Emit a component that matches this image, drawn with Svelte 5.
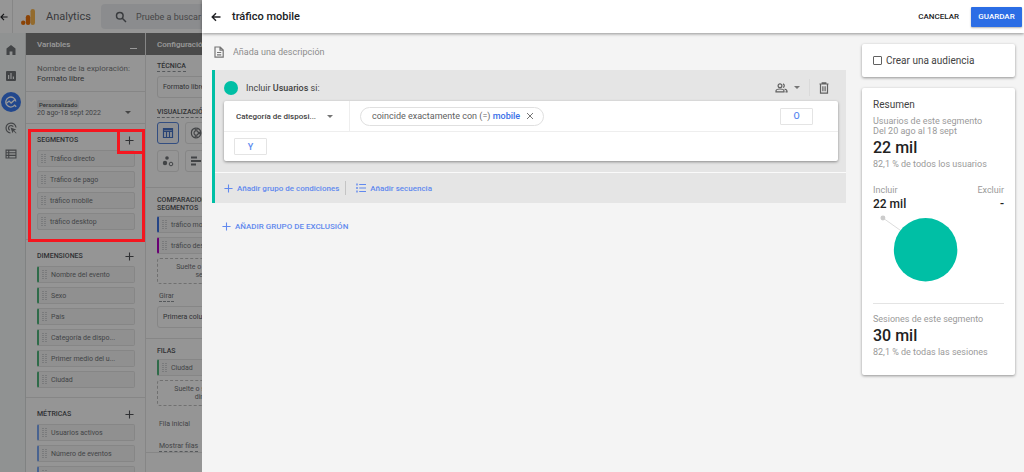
<script lang="ts">
  const segments = ['Tráfico directo', 'Tráfico de pago', 'tráfico mobile', 'tráfico desktop'];
  const dimensions = ['Nombre del evento', 'Sexo', 'País', 'Categoría de dispo...', 'Primer medio del u...', 'Ciudad'];
  const metrics = ['Usuarios activos', 'Número de eventos', 'Sesiones'];

  let description = $state('');
  let createAudience = $state(false);
</script>

{#snippet plus()}
  <svg class="plus" viewBox="0 0 10 10" aria-hidden="true"><path d="M5 .5v9M.5 5h9" /></svg>
{/snippet}

{#snippet chip(label: string, kind: string)}
  <li class="chip {kind}">
    <svg class="grip" viewBox="0 0 5 10" aria-hidden="true"><path d="M1 0v10M4 0v10" /></svg>
    <span>{label}</span>
  </li>
{/snippet}

<div class="app">
  <header class="topbar">
    <button class="back" aria-label="Atrás">
      <svg viewBox="0 0 10 10"><path d="M9.500 5H1.500M5 1.200 1.200 5 5 8.800" /></svg>
    </button>
    <div class="brand">
      <svg class="logo" viewBox="0 0 14 16" aria-hidden="true">
        <rect x="9.500" y="0" width="4.500" height="16" rx="2.200" fill="#f5b24e" />
        <rect x="4.800" y="6" width="4.500" height="10" rx="2.200" fill="#e8710a" />
        <circle cx="2.200" cy="13.700" r="2.200" fill="#e8710a" />
      </svg>
      <span>Analytics</span>
    </div>
    <label class="search">
      <svg viewBox="0 0 12 12" aria-hidden="true"><circle cx="4.800" cy="4.800" r="3.300" /><path d="m7.300 7.300 3.700 3.700" /></svg>
      <input type="text" placeholder="Pruebe a buscar" aria-label="Buscar" />
    </label>
  </header>

  <div class="workspace">
    <nav class="rail" aria-label="Principal">
      <a href="#inicio" aria-label="Inicio">
        <svg viewBox="0 0 12 12"><path fill="currentColor" d="M6 1 1.500 4.600V11H4.600V7.400H7.400V11H10.500V4.600Z" /></svg>
      </a>
      <a href="#informes" aria-label="Informes">
        <svg viewBox="0 0 12 12"><path fill="currentColor" fill-rule="evenodd" d="M2 1h8a1 1 0 0 1 1 1v8a1 1 0 0 1-1 1H2a1 1 0 0 1-1-1V2a1 1 0 0 1 1-1ZM3 5v4h1.200V5ZM5.400 3v6h1.200V3ZM7.800 6.500V9H9V6.500Z" /></svg>
      </a>
      <a href="#explorar" class="current" aria-label="Explorar">
        <svg viewBox="0 0 12 12" fill="none" stroke="currentColor" stroke-width="1.300">
          <path d="M10.800 5.500A5 5 0 1 0 9.700 9.200L11.200 10.700" /><path d="m1.500 7.200 2.600-2.100 2 1.900 3.900-3.600" />
        </svg>
      </a>
      <a href="#publicidad" aria-label="Publicidad">
        <svg viewBox="0 0 12 12" fill="none" stroke="currentColor" stroke-width="1.200">
          <path d="M5.500 11A5 5 0 1 1 11 5.500M4.700 8.300A2.600 2.600 0 1 1 8.300 4.700" /><path fill="currentColor" stroke="none" d="m5.500 5.500 5.700 2-2.100 1L11.500 11 11 11.500 8.500 9.100l-1 2.100Z" />
        </svg>
      </a>
      <a href="#configurar" aria-label="Configurar">
        <svg viewBox="0 0 12 12"><path fill="currentColor" fill-rule="evenodd" d="M.5 1.500h11v9H.5ZM1.600 2.700v1.500h1.600V2.700ZM4.300 2.700v1.500h6.100V2.700ZM1.600 5.300v1.500h1.600V5.300ZM4.300 5.300v1.500h6.100V5.300ZM1.600 7.900v1.500h1.600V7.900ZM4.300 7.900v1.500h6.100V7.900Z" /></svg>
      </a>
    </nav>

    <section class="column variables">
      <h2 class="column-head">Variables <button class="minimize" aria-label="Minimizar"></button></h2>
      <div class="name">
        <span class="muted">Nombre de la exploración:</span>
        <span>Formato libre</span>
      </div>
      <button class="dates">
        <span class="range"><span class="tag">Personalizado</span><span>20 ago-18 sept 2022</span></span>
        <span class="caret"></span>
      </button>
      <div class="block segments">
        <div class="block-head"><h3>SEGMENTOS</h3><button aria-label="Añadir segmento">{@render plus()}</button></div>
        <ul>
          {#each segments as s}{@render chip(s, 'segment')}{/each}
        </ul>
        <div class="mark"></div>
        <div class="mark mark-add"></div>
      </div>
      <div class="block">
        <div class="block-head"><h3>DIMENSIONES</h3><button aria-label="Añadir dimensión">{@render plus()}</button></div>
        <ul>
          {#each dimensions as d}{@render chip(d, 'dimension')}{/each}
        </ul>
      </div>
      <div class="block">
        <div class="block-head"><h3>MÉTRICAS</h3><button aria-label="Añadir métrica">{@render plus()}</button></div>
        <ul>
          {#each metrics as m}{@render chip(m, 'metric')}{/each}
        </ul>
      </div>
    </section>

    <section class="column settings">
      <h2 class="column-head">Configuración</h2>
      <div class="group technique">
        <label class="hint" for="technique">TÉCNICA</label>
        <select id="technique"><option>Formato libre</option></select>
        <h3 class="hint visual-title">VISUALIZACIÓN</h3>
        <div class="visuals">
          <button class="selected" aria-label="Tabla">
            <svg viewBox="0 0 12 12" fill="none" stroke="currentColor" stroke-width="1.200"><path d="M1.500 1.500h9v9h-9ZM1.500 4.500h9M4.500 4.500v6M7.500 4.500v6" /><path d="M1.500 2.500h9" stroke-width="2" /></svg>
          </button>
          <button aria-label="Gráfico de anillos">
            <svg viewBox="0 0 12 12" fill="none" stroke="currentColor" stroke-width="1.200"><path d="M5.300 1.200a4.900 4.900 0 0 0 0 9.600V8a2.200 2.200 0 0 1 0-4ZM6.800 1.200A4.900 4.900 0 0 1 10.800 5.300H8.200A2.200 2.200 0 0 0 6.800 4ZM6.800 10.800A4.900 4.900 0 0 0 10.800 6.700H8.200A2.200 2.200 0 0 1 6.800 8Z" /></svg>
          </button>
          <button aria-label="Gráfico de líneas"></button>
          <button aria-label="Gráfico de dispersión">
            <svg viewBox="0 0 12 12"><circle cx="5" cy="3" r="1.800" fill="currentColor" /><circle cx="3" cy="8" r="2.200" fill="currentColor" /><circle cx="9" cy="9" r="1.800" fill="none" stroke="currentColor" /></svg>
          </button>
          <button aria-label="Gráfico de barras">
            <svg viewBox="0 0 12 12" fill="none" stroke="currentColor" stroke-width="1.800"><path d="M1 2.500h6M1 6h10M1 9.500h5" /></svg>
          </button>
          <button aria-label="Mapa"></button>
        </div>
      </div>
      <div class="group compare">
        <h3>COMPARACIONES DE<br />SEGMENTOS</h3>
        <ul>
          {@render chip('tráfico mobile', 'blue')}
          {@render chip('tráfico desktop', 'purple')}
        </ul>
        <div class="drop">Suelte o seleccione un<br />segmento</div>
        <label class="hint plain" for="pivot">Girar</label>
        <select id="pivot"><option>Primera columna</option></select>
      </div>
      <div class="group rows">
        <h3>FILAS</h3>
        <ul>{@render chip('Ciudad', 'dimension')}</ul>
        <div class="drop">Suelte o seleccione una<br />dimensión</div>
        <span class="plain">Fila inicial</span>
        <span class="hint plain">Mostrar filas</span>
      </div>
    </section>
  </div>

  <div class="scrim"></div>

  <section class="drawer" aria-label="Editar segmento">
    <header class="drawer-head">
      <button class="back" aria-label="Volver">
        <svg viewBox="0 0 10 10"><path d="M9.500 5H1.500M5 1.200 1.200 5 5 8.800" /></svg>
      </button>
      <h1>tráfico mobile</h1>
      <button class="cancel">CANCELAR</button>
      <button class="save">GUARDAR</button>
    </header>

    <div class="drawer-body">
      <main class="editor">
        <label class="description">
          <svg viewBox="0 0 10 12" aria-hidden="true"><path d="M1 1h5.200L9.200 4v7.200H1ZM6 1v3.200h3M3 6.500h4.200M3 8.800h4.200" /></svg>
          <input type="text" placeholder="Añada una descripción" aria-label="Descripción" bind:value={description} />
        </label>

        <div class="conditions">
          <div class="conditions-head">
            <span class="dot"></span>
            <span>Incluir <b>Usuarios</b> si:</span>
            <button class="scope" aria-label="Ámbito">
              <svg viewBox="0 0 13 10" aria-hidden="true"><circle cx="5" cy="2.700" r="1.900" /><path d="M1 8.800V7.900C1 6.700 3.500 6 5 6s4 .7 4 1.900v.9ZM8 .9a1.900 1.900 0 0 1 0 3.600M9.600 6.200c1.400.4 2.400.9 2.400 1.700v.9H10.500" /></svg>
              <span class="caret"></span>
            </button>
            <button class="trash" aria-label="Eliminar grupo">
              <svg viewBox="0 0 10 12" aria-hidden="true"><path d="M.5 2h9M3.200 2V.8h3.600V2M1.500 2.200v9h7v-9M3.900 4.200v5M6.100 4.200v5" /></svg>
            </button>
          </div>

          <div class="card rule">
            <div class="rule-row">
              <div class="field">
                <select aria-label="Dimensión"><option>Categoría de disposi...</option></select>
                <span class="caret"></span>
              </div>
              <div class="filter">
                <span>coincide exactamente con (=) <b>mobile</b></span>
                <button aria-label="Quitar filtro"><svg viewBox="0 0 8 8"><path d="m1 1 6 6M7 1 1 7" /></svg></button>
              </div>
              <button class="logic or">O</button>
            </div>
            <div class="rule-row">
              <button class="logic and">Y</button>
            </div>
          </div>

          <div class="actions">
            <button class="link">{@render plus()} Añadir grupo de condiciones</button>
            <button class="link">
              <svg class="list" viewBox="0 0 10 10" aria-hidden="true"><path d="M3.200 1.500H10M3.200 5H10M3.200 8.500H10" /><path d="M.3 1.500h1.400M.3 5h1.400M.3 8.500h1.400" stroke-width="2" /></svg>
              Añadir secuencia
            </button>
          </div>
        </div>

        <button class="link exclude">{@render plus()} AÑADIR GRUPO DE EXCLUSIÓN</button>
      </main>

      <aside>
        <label class="card audience">
          <input type="checkbox" bind:checked={createAudience} />
          Crear una audiencia
        </label>
        <div class="card summary">
          <h2>Resumen</h2>
          <p>Usuarios de este segmento<br />Del 20 ago al 18 sept</p>
          <strong>22 mil</strong>
          <p>82,1 % de todos los usuarios</p>
          <dl>
            <div><dt>Incluir</dt><dd>22 mil</dd></div>
            <div class="right"><dt>Excluir</dt><dd>-</dd></div>
          </dl>
          <svg class="pie" viewBox="0 0 132 70" aria-hidden="true">
            <path d="M10 4 34 21" stroke="#dcdcdc" />
            <circle cx="10" cy="4" r="2.500" fill="#ccc" />
            <circle cx="53" cy="36" r="32" fill="#00bfa5" />
          </svg>
          <hr />
          <p>Sesiones de este segmento</p>
          <strong>30 mil</strong>
          <p>82,1 % de todas las sesiones</p>
        </div>
      </aside>
    </div>
  </section>
</div>

<style>
  :global(body) {
    font-family: Roboto, "Liberation Sans", sans-serif;
    color: #202124;
  }

  .app {
    position: relative;
    height: 100vh;
    overflow: hidden;
    background: #f8f8f8;
    font-size: 8px;
  }

  .app :global(*) { box-sizing: border-box; }

  button, input, select {
    font: inherit;
    color: inherit;
    background: none;
    border: 0;
    border-radius: 0;
    padding: 0;
    margin: 0;
    appearance: none;
  }

  button { cursor: pointer; }
  svg { display: block; flex: none; }
  h1, h2, h3, p, ul, dl, dd { margin: 0; padding: 0; }
  ul { list-style: none; }
  h3 { font-size: 7px; font-weight: 500; line-height: 8px; }
  input:focus { outline: none; }

  .back svg {
    width: 10px;
    height: 10px;
    fill: none;
    stroke: currentColor;
    stroke-width: 1.4;
  }

  .plus {
    width: 9px;
    height: 9px;
    fill: none;
    stroke: currentColor;
    stroke-width: 1.2;
  }

  .caret {
    border: 3px solid transparent;
    border-top-color: #757575;
    border-bottom: 0;
  }

  /* page behind the drawer */
  .topbar {
    display: flex;
    align-items: center;
    height: 33px;
    background: #fbfbfb;
  }

  .topbar .back {
    display: flex;
    align-items: center;
    width: 13px;
    height: 33px;
    border-right: 1px solid #e0e0e0;
  }

  .topbar .back svg { width: 8px; height: 8px; }

  .brand {
    display: flex;
    align-items: center;
    gap: 11px;
    width: 88px;
    padding-left: 8px;
    font-size: 11px;
    color: #5f6368;
  }

  .logo { width: 14px; height: 16px; }

  .search {
    display: flex;
    align-items: center;
    gap: 9px;
    flex: 1;
    height: 25px;
    padding-left: 14px;
    border-radius: 4px;
    background: #e8eaed;
  }

  .search svg {
    width: 12px;
    height: 12px;
    fill: none;
    stroke: #5f6368;
    stroke-width: 1.5;
  }

  .search input { flex: 1; font-size: 9px; }
  .search input::placeholder { color: #757575; opacity: 1; }

  .workspace { display: flex; color: #505357; font-size: 7px; }

  .rail {
    display: flex;
    flex-direction: column;
    align-items: center;
    gap: 6px;
    width: 26px;
    height: calc(100vh - 33px);
    padding: 7px 5px 0 1px;
    border-right: 1px solid #d5d9d9;
    background: #f1f4f3;
  }

  .rail a {
    display: grid;
    place-items: center;
    width: 20px;
    height: 20px;
    border-radius: 50%;
    color: #6f7276;
  }

  .rail svg { width: 12px; height: 12px; }
  .rail .current { background: #3a78ec; color: #fff; }

  .column { flex: none; border-right: 1px solid #dfdfdf; }
  .variables { width: 120px; }
  .settings { width: 130px; }

  .column-head {
    display: flex;
    justify-content: space-between;
    align-items: center;
    height: 22px;
    padding: 0 8px 0 11px;
    background: #7c7c7c;
    color: #fff;
    font-size: 8px;
    font-weight: 500;
  }

  .minimize {
    width: 7px;
    height: 9px;
    border-bottom: 1px solid #fff;
  }

  .name {
    display: flex;
    flex-direction: column;
    height: 37px;
    padding: 9px 0 0 11px;
    border-bottom: 1px solid #dfdfdf;
    font-size: 8px;
    line-height: 10px;
  }

  .muted { color: #7a7d80; }

  .dates {
    display: flex;
    justify-content: space-between;
    align-items: end;
    width: 100%;
    height: 32px;
    padding: 0 14px 5px 11px;
    border-bottom: 1px solid #dfdfdf;
    line-height: 9px;
    text-align: left;
    color: #6f7276;
  }

  .dates .caret { margin-bottom: 4px; }
  .range { display: flex; flex-direction: column; align-items: start; }

  .tag {
    padding: 0 2px;
    border-radius: 2px;
    background: #e6e6e6;
    color: #505357;
    font-size: 6px;
    font-weight: 500;
  }

  .block { padding: 10px 10px 9px 11px; }
  .block + .block { border-top: 1px solid #dfdfdf; }
  .segments { position: relative; }

  .block-head {
    display: flex;
    justify-content: space-between;
    align-items: center;
    height: 12px;
    padding-right: 1px;
    margin-bottom: 4px;
  }

  ul { display: grid; gap: 4px; }

  .chip {
    display: flex;
    align-items: center;
    gap: 4px;
    height: 17px;
    padding-left: 3px;
    border: 1px solid #e0e0e0;
    border-radius: 2px;
    background: #f0f0f0;
    color: #6f7276;
    white-space: nowrap;
  }

  .dimension, .metric, .blue, .purple { border-left-width: 2px; }
  .dimension { border-left-color: #4fb37a; }
  .metric { border-left-color: #7aa5f0; }
  .blue { border-left-color: #3f72e0; }
  .purple { border-left-color: #b000c0; }

  .grip {
    width: 5px;
    height: 10px;
    stroke: #a8abaf;
    stroke-width: 1;
    stroke-dasharray: 1 1;
  }

  .mark {
    position: absolute;
    z-index: 2;
    top: 5px;
    left: 2px;
    right: 0;
    bottom: -3px;
    border: 3px solid #f5161f;
  }

  .mark-add { left: auto; bottom: auto; width: 28px; height: 25px; }

  .group { padding: 0 10px 0 11px; border-bottom: 1px solid #dfdfdf; }
  .hint { display: inline-block; border-bottom: 1px dashed #909499; line-height: 9px; font-weight: 500; }
  .plain { display: block; width: max-content; margin-left: 2px; font-weight: 400; color: #6f7276; }
  .technique { height: 133px; padding-top: 7px; }
  .visual-title { margin-top: 10px; }
  .technique select { margin-top: 4px; }

  .settings select {
    display: block;
    width: 100%;
    height: 22px;
    padding-left: 5px;
    border: 1px solid #dfdfdf;
    border-radius: 3px;
  }

  .visuals {
    display: grid;
    grid-template-columns: repeat(3, 22px);
    gap: 6px;
    margin-top: 4px;
  }

  .visuals button {
    display: grid;
    place-items: center;
    height: 22px;
    border: 1px solid #dfdfdf;
    border-radius: 3px;
    color: #6f7276;
  }

  .visuals svg { width: 12px; height: 12px; }
  .visuals .selected { border-color: #5583d8; color: #4470c4; background: #eef1f6; }

  .compare { height: 151px; padding-top: 8px; }
  .compare ul { margin-top: 4px; }

  .drop {
    display: grid;
    place-content: center;
    height: 26px;
    margin-top: 4px;
    border: 1px dashed #bbb;
    border-radius: 3px;
    color: #6f7276;
    line-height: 8px;
    text-align: center;
  }

  .drop + .plain { margin-top: 8px; }
  .compare select { margin-top: 4px; }
  .rows { padding-top: 8px; }
  .rows ul { margin-top: 4px; }
  .rows .plain { margin-top: 14px; }

  .scrim {
    position: absolute;
    inset: 0;
    z-index: 1;
    background: rgba(0, 0, 0, 0.4);
  }

  /* segment editor */
  .drawer {
    position: absolute;
    z-index: 3;
    inset: 0 0 0 202px;
    display: flex;
    flex-direction: column;
    background: #f4f4f4;
  }

  .drawer-head {
    display: flex;
    align-items: center;
    height: 33px;
    padding: 0 2px 0 9px;
    background: #fff;
    box-shadow: 0 1px 3px rgba(0, 0, 0, 0.4);
  }

  h1 {
    flex: 1;
    margin-left: 11px;
    font-size: 11px;
    font-weight: 500;
  }

  .cancel, .save { font-weight: 500; }

  .save {
    width: 51px;
    height: 20px;
    margin-left: 12px;
    border-radius: 1px;
    background: #2b6de5;
    color: #fff;
    box-shadow: 0 1px 2px rgba(0, 0, 0, 0.3);
  }

  .drawer-body {
    display: flex;
    gap: 16px;
    padding: 11px 9px 0 10px;
  }

  .editor { flex: 1; }

  .description {
    display: flex;
    align-items: center;
    gap: 9px;
    height: 16px;
    margin: 0 0 10px 2px;
    font-size: 9px;
  }

  .description svg {
    width: 10px;
    height: 12px;
    fill: none;
    stroke: #757575;
    stroke-width: 1.2;
  }

  .description input { flex: 1; }
  .description input::placeholder { color: #8c8c8c; opacity: 1; }

  .conditions {
    border-left: 3px solid #00bfa5;
    background: #e5e5e5;
  }

  .conditions-head {
    display: flex;
    align-items: center;
    height: 31px;
    padding: 4px 17px 0 9px;
    font-size: 9px;
    color: #424242;
  }

  b { font-weight: 500; }

  .dot {
    width: 14px;
    height: 14px;
    margin-right: 8px;
    border-radius: 50%;
    background: #00bfa5;
  }

  .scope {
    display: flex;
    align-items: center;
    gap: 6px;
    height: 17px;
    margin-left: auto;
    padding-right: 9px;
    border-right: 1px solid #dadada;
  }

  .scope svg, .trash svg {
    fill: none;
    stroke: #616161;
    stroke-width: 1.2;
  }

  .scope svg { width: 13px; height: 10px; }
  .trash { margin-left: 9px; }
  .trash svg { width: 10px; height: 12px; }

  .card {
    border-radius: 2px;
    background: #fff;
    box-shadow: 0 1px 3px rgba(0, 0, 0, 0.4);
  }

  .rule { margin: 0 8px 11px 9px; }

  .rule-row {
    display: flex;
    align-items: center;
    height: 30px;
  }

  .rule-row + .rule-row { border-top: 1px solid #eee; }

  .field {
    display: flex;
    align-items: center;
    width: 126px;
    height: 100%;
    padding: 0 16px 0 12px;
    border-right: 1px solid #eee;
    font-weight: 500;
    color: #424242;
  }

  .field select { flex: 1; min-width: 0; }

  .filter {
    display: flex;
    align-items: center;
    gap: 6px;
    height: 19px;
    margin-left: 10px;
    padding: 0 9px 0 11px;
    border: 1px solid #e0e0e0;
    border-radius: 10px;
    font-size: 9px;
    color: #616161;
  }

  .filter b { color: #3a6fe8; }

  .filter svg {
    width: 8px;
    height: 8px;
    stroke: #757575;
    stroke-width: 1;
  }

  .logic {
    width: 33px;
    height: 17px;
    border: 1px solid #e4e4e4;
    border-radius: 1px;
    color: #5c8af0;
    font-size: 9px;
    font-weight: 500;
  }

  .or { margin: 0 25px 0 auto; }
  .and { margin-left: 10px; }

  .actions {
    display: flex;
    align-items: center;
    height: 31px;
    padding-left: 9px;
    border-top: 1px solid #fafafa;
  }

  .link {
    display: flex;
    align-items: center;
    gap: 4px;
    height: 14px;
    color: #6189ee;
    font-weight: 500;
  }

  .link + .link {
    margin-left: 6px;
    padding-left: 10px;
    border-left: 1px solid #c4c4c4;
  }

  .list {
    width: 10px;
    height: 10px;
    fill: none;
    stroke: currentColor;
    stroke-width: 1.2;
  }

  .exclude { margin: 16px 0 0 10px; }

  aside { width: 153px; }

  .audience {
    display: flex;
    align-items: center;
    gap: 4px;
    height: 33px;
    padding-left: 11px;
    font-size: 10px;
    color: #424242;
  }

  .audience input {
    width: 9px;
    height: 9px;
    border: 1px solid #616161;
    border-radius: 1px;
  }

  .audience input:checked { background: #2b6de5; }

  .summary {
    margin-top: 11px;
    padding: 10px 11px 18px;
    color: #9a9a9a;
    font-size: 9px;
    line-height: 10px;
  }

  .summary h2 {
    margin-bottom: 5px;
    color: #424242;
    font-size: 10px;
    font-weight: 400;
    line-height: 13px;
  }

  .summary strong {
    display: block;
    color: #212121;
    font-size: 16px;
    font-weight: 500;
    line-height: 23px;
  }

  dl {
    display: flex;
    justify-content: space-between;
    margin-top: 16px;
  }

  dd {
    color: #212121;
    font-size: 12px;
    font-weight: 500;
    line-height: 19px;
  }

  .right { text-align: right; }
  .pie { width: 100%; fill: none; }

  hr {
    margin: 20px 0 10px;
    border: 0;
    border-top: 1px solid #e4e4e4;
  }
</style>
